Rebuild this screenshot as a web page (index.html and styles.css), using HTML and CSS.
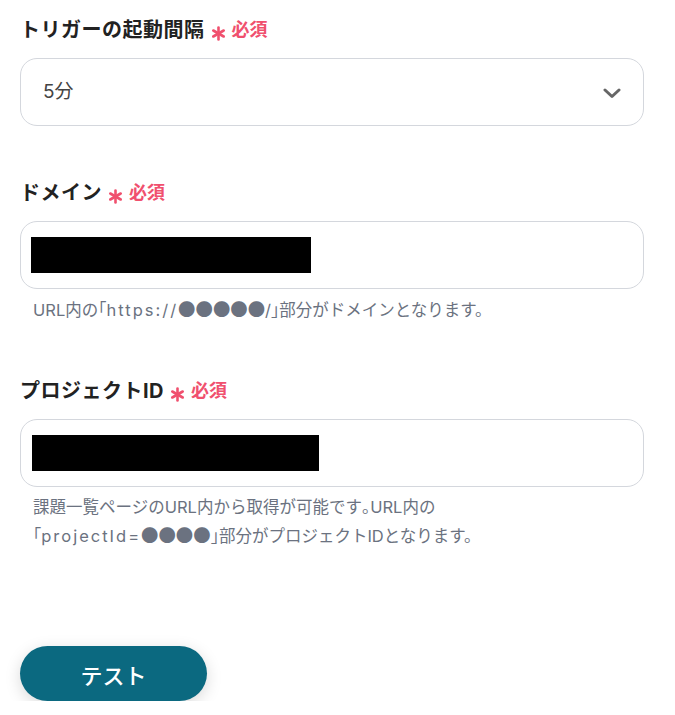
FILE: index.html
```html
<!DOCTYPE html>
<html lang="ja">
<head>
<meta charset="utf-8">
<link rel="stylesheet" href="styles.css">
</head>
<body>
<div class="form">
  <div class="field">
    <div class="label">トリガーの起動間隔<svg class="ast" width="15" height="15" viewBox="0 0 15 15"><g stroke="#f0506e" stroke-width="2.6" stroke-linecap="round"><path d="M7.5 1.5 V13.5"/><path d="M2.3 4.5 L12.7 10.5"/><path d="M2.3 10.5 L12.7 4.5"/></g></svg><span class="req">必須</span></div>
    <div class="box select">
      <span class="value">5分</span>
      <svg class="chev" width="18" height="11" viewBox="0 0 18 11"><path d="M2 2 L9 8.5 L16 2" fill="none" stroke="#666" stroke-width="3" stroke-linecap="round" stroke-linejoin="round"/></svg>
    </div>
  </div>
  <div class="field">
    <div class="label">ドメイン<svg class="ast" width="15" height="15" viewBox="0 0 15 15"><g stroke="#f0506e" stroke-width="2.6" stroke-linecap="round"><path d="M7.5 1.5 V13.5"/><path d="M2.3 4.5 L12.7 10.5"/><path d="M2.3 10.5 L12.7 4.5"/></g></svg><span class="req">必須</span></div>
    <div class="box input"><div class="redact r1"></div></div>
    <div class="help">URL内の<span class="br">「</span><span class="lat">https://</span><span class="dot">●●●●●</span>/<span class="br">」</span>部分がドメインとなります。</div>
  </div>
  <div class="field">
    <div class="label">プロジェクトID<svg class="ast" width="15" height="15" viewBox="0 0 15 15"><g stroke="#f0506e" stroke-width="2.6" stroke-linecap="round"><path d="M7.5 1.5 V13.5"/><path d="M2.3 4.5 L12.7 10.5"/><path d="M2.3 10.5 L12.7 4.5"/></g></svg><span class="req">必須</span></div>
    <div class="box input"><div class="redact r2"></div></div>
    <div class="help">課題一覧ページのURL内から取得が可能です<span class="br">。</span>URL内の<br><span class="br">「</span><span class="lat">projectId=</span><span class="dot">●●●●</span><span class="br">」</span>部分がプロジェクトIDとなります。</div>
  </div>
</div>
<div class="actions">
  <button class="btn">テスト</button>
</div>
</body>
</html>
```
FILE: styles.css
```css
* { box-sizing: border-box; }
html, body { margin: 0; background: #fff; }
body {
  font-family: Inter, "Noto Sans CJK JP", sans-serif;
  padding: 16px 31px 0 20px;
  width: 675px;
}
.form { display: flex; flex-direction: column; gap: 53px; }
.field { display: flex; flex-direction: column; }
.label {
  font-size: 20px;
  font-weight: 700;
  color: #222;
  line-height: 28px;
  height: 28px;
  letter-spacing: 0.5px;
  display: flex;
  align-items: center;
}
.ast {
  margin-left: 6px;
  margin-right: 6px;
  transform: translateY(3px);
}
.req {
  color: #f0506e;
  font-size: 18px;
  font-weight: 700;
  letter-spacing: 0;
}
.box {
  margin-top: 14px;
  height: 68px;
  border: 1px solid #d4d7dd;
  border-radius: 17px;
  display: flex;
  align-items: center;
}
.select { padding: 0 22px 0 22px; justify-content: space-between; }
.value { font-size: 19px; color: #444; margin-bottom: 6px; }
.chev { margin-top: 2px; }
.input { padding-left: 10px; }
.redact { background: #000; height: 36px; }
.r1 { width: 280px; }
.r2 { width: 287px; margin-left: 1px; }
.help {
  margin-top: 6px;
  padding-left: 13px;
  font-size: 16.5px;
  line-height: 27px;
  color: #6b7280;
}
.br { font-feature-settings: "halt"; font-family: "Noto Sans CJK JP", sans-serif; }
.lat { letter-spacing: 2px; }
.dot { font-family: "Noto Sans CJK JP", sans-serif; font-size: 17.4px; }
.actions { margin-top: 96px; }
.btn {
  width: 187px;
  height: 55px;
  border: none;
  border-radius: 28px;
  background: #0b6980;
  color: #fff;
  font-family: Inter, "Noto Sans CJK JP", sans-serif;
  font-size: 22px;
  font-weight: 500;
  box-shadow: 0 4px 16px rgba(0,0,0,0.15);
}
```
